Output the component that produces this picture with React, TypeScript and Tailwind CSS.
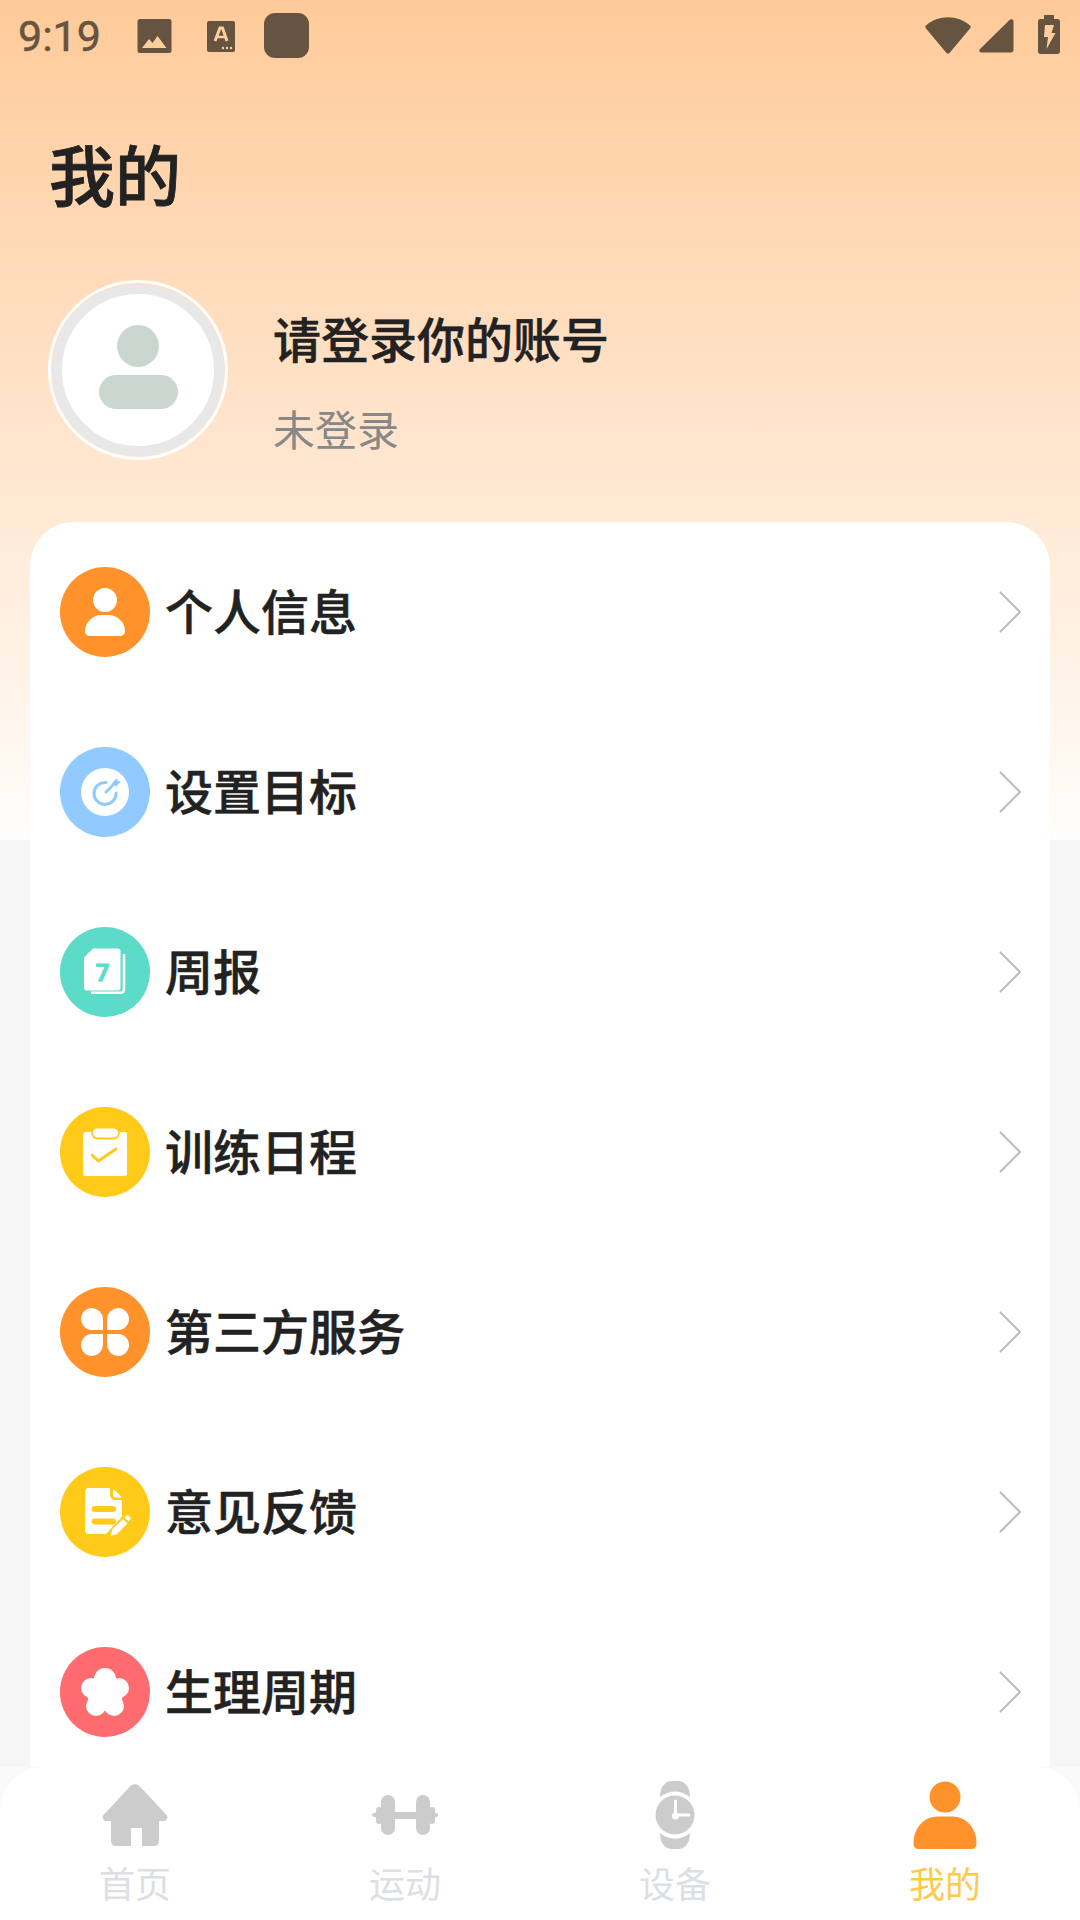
import React from "react";

const Chevron = () => (
  <svg width="22" height="42" viewBox="0 0 22 42" fill="none" className="shrink-0">
    <path d="M1 1L21 21L1 41" stroke="#bdbdbd" strokeWidth="2.2" />
  </svg>
);

const Badge = ({ color, children }: { color: string; children: React.ReactNode }) => (
  <svg width="90" height="90" viewBox="0 0 90 90" className="shrink-0">
    <circle cx="45" cy="45" r="45" fill={color} />
    {children}
  </svg>
);

const rows: { label: string; icon: React.ReactNode }[] = [
  {
    label: "个人信息",
    icon: (
      <Badge color="#ff922b">
        <circle cx="45" cy="33" r="12" fill="#fff" />
        <path d="M25 64C25 55 33 48 41 48H49C57 48 65 55 65 64C65 67 63 69 60 69H30C27 69 25 67 25 64Z" fill="#fff" />
      </Badge>
    ),
  },
  {
    label: "设置目标",
    icon: (
      <Badge color="#90caff">
        <circle cx="45" cy="45" r="24" fill="#fff" />
        <path d="M46 35.5A11 11 0 1 0 56 46" fill="none" stroke="#90caff" strokeWidth="3" strokeLinecap="round" />
        <path d="M46 45L55 36" stroke="#90caff" strokeWidth="3" strokeLinecap="round" />
        <path d="M52 36L57 31L57.5 34L61 34.5L56 39.5Z" fill="#90caff" />
      </Badge>
    ),
  },
  {
    label: "周报",
    icon: (
      <Badge color="#5cdcc8">
        <path d="M33 21.5H58C59.5 21.5 60.5 22.5 60.5 24V61C60.5 62.5 59.5 63.5 58 63.5H26.500C25 63.500 24 62.500 24 61V30.500Z" fill="#fff" />
        <path d="M64 27V62C64 64.500 63 65.800 60.500 65.800H31" fill="none" stroke="#fff" strokeWidth="2.600" />
        <text x="42.700" y="53.500" textAnchor="middle" fontSize="24" fontWeight="700" fill="#5cdcc8" stroke="#5cdcc8" strokeWidth="0.900" fontFamily="Roboto, sans-serif">7</text>
      </Badge>
    ),
  },
  {
    label: "训练日程",
    icon: (
      <Badge color="#ffca18">
        <rect x="23" y="25" width="44" height="44" rx="2.500" fill="#fff" />
        <rect x="32" y="20.500" width="27" height="11" rx="5.500" fill="#fff" stroke="#ffca18" strokeWidth="1.800" />
        <path d="M32 48L38.300 54L56 42" fill="none" stroke="#ffca18" strokeWidth="3" strokeLinecap="round" strokeLinejoin="round" />
      </Badge>
    ),
  },
  {
    label: "第三方服务",
    icon: (
      <Badge color="#ff922b">
        <path d="M21 32A11 11 0 0 1 32 21A11.500 11.500 0 0 1 43 32V43H32A11 11 0 0 1 21 32Z" fill="#fff" />
        <path d="M69 32A11 11 0 0 0 58 21A11.500 11.500 0 0 0 47 32V43H58A11 11 0 0 0 69 32Z" fill="#fff" />
        <path d="M21 58A11 11 0 0 0 32 69A11.500 11.500 0 0 0 43 58V47H32A11 11 0 0 0 21 58Z" fill="#fff" />
        <path d="M69 58A11 11 0 0 1 58 69A11.500 11.500 0 0 1 47 58V47H58A11 11 0 0 1 69 58Z" fill="#fff" />
      </Badge>
    ),
  },
  {
    label: "意见反馈",
    icon: (
      <Badge color="#ffca18">
        <path d="M29 21H50V27C50 31 52 33 56 33H62V49.500L46 67H29C26.500 67 25 65.500 25 63V25C25 22.500 26.500 21 29 21Z" fill="#fff" />
        <path d="M53 21.500L62 30.500H56C54 30.500 53 29.500 53 27.500Z" fill="#fff" />
        <rect x="31.700" y="39" width="24.300" height="6" rx="3" fill="#ffca18" />
        <rect x="31.700" y="51.500" width="24.300" height="6" rx="3" fill="#ffca18" />
        <path d="M50.500 69L52.500 62L63 52L67.500 56.500L57 67Z" fill="#fff" />
        <path d="M64.500 50.500L66.500 48.500Q67.500 47.500 68.500 48.500L70.500 50.500Q71 51.500 70 52.500L68.500 54.500Z" fill="#fff" />
      </Badge>
    ),
  },
  {
    label: "生理周期",
    icon: (
      <Badge color="#ff6b6f">
        <g fill="#fff">
          <circle cx="45" cy="46" r="18" />
          <circle cx="45" cy="32" r="11" />
          <circle cx="31" cy="41" r="10" />
          <circle cx="59" cy="41" r="10" />
          <circle cx="36" cy="59" r="10" />
          <circle cx="54" cy="59" r="10" />
        </g>
      </Badge>
    ),
  },
];

const tabs: { label: string; active?: boolean; icon: React.ReactNode }[] = [
  {
    label: "首页",
    icon: (
      <svg width="66" height="62" viewBox="0 0 66 62">
        <path d="M28.500 2C31 -0.500 35 -0.500 37.500 2L64.500 31C66.500 33 65 37 62 37H57V57C57 59.800 55 62 52 62H40V44H29V62H14C11 62 9 59.800 9 57V37H4C1 37 -0.500 33 1.500 31Z" fill="#cccccc" />
      </svg>
    ),
  },
  {
    label: "运动",
    icon: (
      <svg width="66" height="40" viewBox="0 0 66 40">
        <g fill="#cccccc">
          <rect x="9" y="0" width="14" height="40" rx="7" />
          <rect x="44" y="0" width="14" height="40" rx="7" />
          <rect x="20" y="17" width="28" height="7" />
          <rect x="4" y="12" width="6" height="17" rx="3" />
          <rect x="57" y="12" width="6" height="17" rx="3" />
          <rect x="0" y="18" width="6" height="4" rx="2" />
          <rect x="60" y="18" width="6" height="4" rx="2" />
        </g>
      </svg>
    ),
  },
  {
    label: "设备",
    icon: (
      <svg width="40" height="68" viewBox="0 0 40 68">
        <g fill="#cccccc">
          <path d="M5 16C5 6 10 0 17 0H23C30 0 35 6 35 16C26 8.500 14 8.500 5 16Z" />
          <path d="M5 52C14 59.500 26 59.500 35 52C35 62 30 68 23 68H17C10 68 5 62 5 52Z" />
          <circle cx="20" cy="34" r="19.500" />
        </g>
        <path d="M20.500 20V34H34" fill="none" stroke="#fff" strokeWidth="3" strokeLinecap="round" />
        <circle cx="20.500" cy="35" r="3.500" fill="#fff" />
      </svg>
    ),
  },
  {
    label: "我的",
    active: true,
    icon: (
      <svg width="64" height="68" viewBox="0 0 64 68">
        <circle cx="32" cy="16" r="15.500" fill="#ff922b" />
        <path d="M0.500 62C0.500 48 10 35.500 25 35.500H39C54 35.500 63.500 48 63.500 62C63.500 66 61.500 68 58 68H6C2.500 68 0.500 66 0.500 62Z" fill="#ff922b" />
      </svg>
    ),
  },
];

export default function App() {
  return (
    <div className="relative w-[1080px] h-[1920px] overflow-hidden bg-[#f6f6f6] font-['Noto_Sans_CJK_SC',sans-serif]">
      <div className="absolute inset-x-0 top-0 h-[840px] bg-gradient-to-b from-[#ffca99] to-[#fffdfb]" />

      <div className="relative">
        {/* status bar */}
        <div className="h-[72px] flex items-start text-[#675440]">
          <span className="ml-[18px] mt-[10px] w-[82px] text-[43px] leading-[52px] [-webkit-text-stroke:0.5px_#675440] font-['Roboto',sans-serif]">9:19</span>
          <svg width="35" height="35" viewBox="0 0 35 35" className="ml-[37px] mt-[19px]">
            <rect x="0.500" y="0" width="34" height="34" rx="2.500" fill="#675440" />
            <path d="M5 29L12 20L15.500 24L20.500 17L29.500 29Z" fill="#ffce9f" />
          </svg>
          <svg width="29" height="31" viewBox="0 0 29 31" className="ml-[35px] mt-[21px]">
            <rect x="0" y="0" width="28" height="31" rx="2" fill="#675440" />
            <path d="M8 20L13 7H15.500L20 20" fill="none" stroke="#ffce9f" strokeWidth="3" />
            <path d="M10 16H18" stroke="#ffce9f" strokeWidth="2.500" />
            <circle cx="16" cy="27" r="1.200" fill="#ffce9f" />
            <circle cx="20" cy="27" r="1.200" fill="#ffce9f" />
            <circle cx="24" cy="27" r="1.200" fill="#ffce9f" />
          </svg>
          <div className="ml-[28px] mt-[13px] w-[45px] h-[45px] rounded-[11px] bg-[#675440]" />
          <svg width="46" height="37" viewBox="0 0 46 37" className="ml-auto mt-[17px]">
            <path d="M1 8.500C13 -2.500 33 -2.500 45 8.500C46 9.500 46 10.500 45 11.500L24.500 36C23.500 37 22.500 37 21.500 36L1 11.500C0 10.500 0 9.500 1 8.500Z" fill="#675440" />
          </svg>
          <svg width="35" height="34" viewBox="0 0 35 34" className="ml-[8px] mt-[19px]">
            <path d="M30.500 1C32 -0.500 34.500 0 34.500 2.500V31C34.500 32.500 33.500 33.500 32 33.500H2.500C0.500 33.500 -0.500 31.500 1 30Z" fill="#675440" />
          </svg>
          <svg width="22" height="39" viewBox="0 0 22 39" className="ml-[24px] mr-[20px] mt-[15px]">
            <path d="M6 0H16V4H19.500C21 4 22 5 22 6.500V36.500C22 38 21 39 19.500 39H2.500C1 39 0 38 0 36.500V6.500C0 5 1 4 2.500 4H6Z" fill="#675440" />
            <path d="M7 10H16L13.500 18H17.500L8.500 34L10 22H6Z" fill="#ffce9f" />
          </svg>
        </div>

        <h1 className="ml-[49px] mt-[60px] h-[80px] text-[66px] leading-[80px] font-medium [-webkit-text-stroke:0.8px_#222222] text-[#222222]">我的</h1>

        {/* profile */}
        <div className="mt-[68px] ml-[48px] flex items-center gap-[45px]">
          <div className="w-[180px] h-[180px] rounded-full border-[3px] border-white p-[1px] shrink-0">
            <div className="w-full h-full rounded-full bg-white border-[10px] border-[#e8e8e8] flex flex-col items-center justify-center gap-[8px] pb-[7px]">
              <div className="w-[42px] h-[42px] rounded-full bg-[#ccd6d1]" />
              <div className="w-[79px] h-[34px] rounded-[17px] bg-[#ccd6d1]" />
            </div>
          </div>
          <div className="flex flex-col mt-[20px]">
            <div className="text-[48px] leading-[64px] font-medium [-webkit-text-stroke:0.5px_#222222] text-[#222222]">请登录你的账号</div>
            <div className="mt-[31px] text-[42px] leading-[56px] text-[#888888]">未登录</div>
          </div>
        </div>

        {/* list */}
        <div className="mt-[62px] mx-[30px] h-[1398px] rounded-t-[44px] bg-white px-[30px]">
          {rows.map((r) => (
            <div key={r.label} className="h-[180px] flex items-center">
              {r.icon}
              <span className="ml-[15px] pb-[6px] text-[48px] leading-[64px] font-medium [-webkit-text-stroke:0.5px_#222222] text-[#222222]">{r.label}</span>
              <span className="ml-auto mr-[-1px] flex">
                <Chevron />
              </span>
            </div>
          ))}
        </div>
      </div>

      {/* bottom nav */}
      <div className="absolute inset-x-0 bottom-0 h-[153px] bg-[#fafafa]">
        <div className="h-full rounded-t-[44px] bg-white grid grid-cols-4">
          {tabs.map((t) => (
            <div key={t.label} className="flex flex-col items-center">
              <div className="h-[93px] pt-[2px] flex items-center justify-center">{t.icon}</div>
              <span className={`text-[36px] leading-[44px] ${t.active ? "text-[#ffc94d]" : "text-[#dcdfe3]"}`}>{t.label}</span>
            </div>
          ))}
        </div>
      </div>
    </div>
  );
}
